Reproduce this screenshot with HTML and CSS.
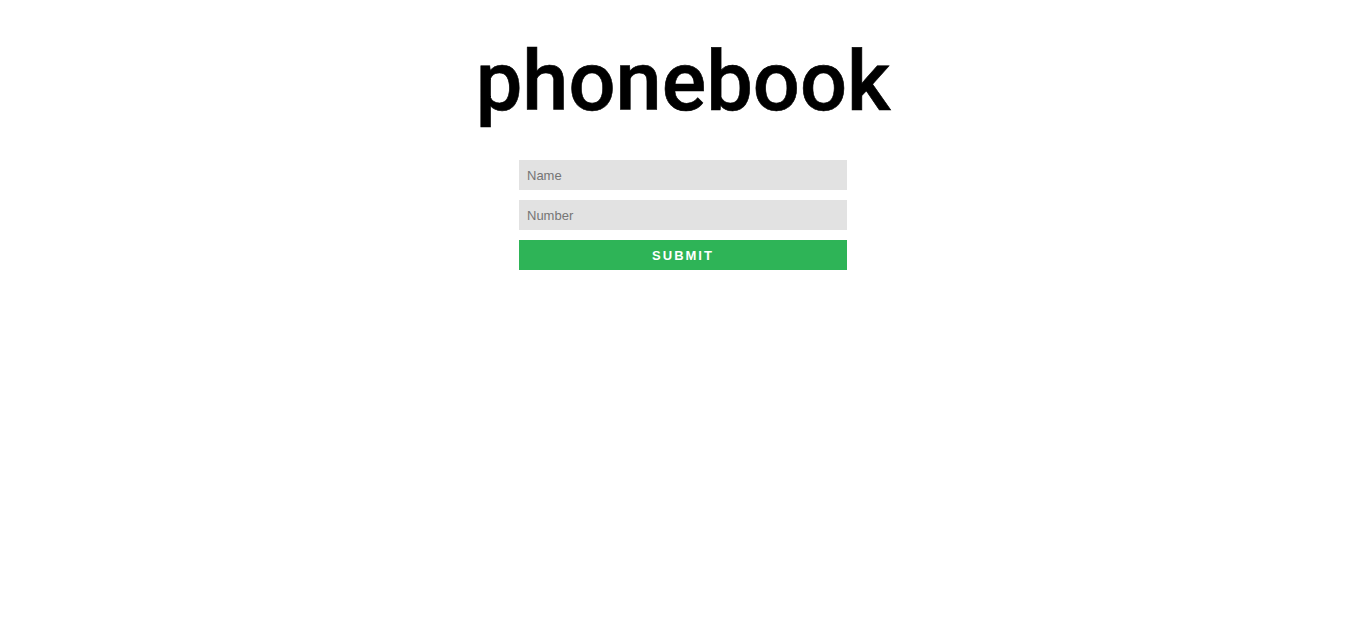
FILE: index.html
```html
<!DOCTYPE html>
<html lang="en">
<head>
<meta charset="utf-8">
<title>phonebook</title>
<link rel="stylesheet" href="styles.css">
</head>
<body>
<main class="app">
  <h1 class="title">phonebook</h1>
  <form class="form">
    <input class="field" type="text" placeholder="Name">
    <input class="field" type="text" placeholder="Number">
    <button class="submit" type="button">SUBMIT</button>
  </form>
</main>
</body>
</html>
```
FILE: styles.css
```css
html, body {
  margin: 0;
  padding: 0;
  background: #fff;
}
.app {
  display: flex;
  flex-direction: column;
  align-items: center;
  font-family: "Liberation Sans", Arial, sans-serif;
}
.title {
  margin: 40px 0 0;
  font-family: Roboto, "Liberation Sans", sans-serif;
  font-weight: 500;
  font-size: 83px;
  line-height: 84px;
  letter-spacing: 0;
  color: #000;
  -webkit-text-stroke: 0.6px #000;
}
.form {
  display: flex;
  flex-direction: column;
  gap: 10px;
  width: 328px;
  margin-top: 36px;
}
.field {
  box-sizing: border-box;
  height: 30px;
  border: none;
  outline: none;
  background: #e2e2e2;
  padding: 0 8px;
  font-family: "Liberation Sans", Arial, sans-serif;
  font-size: 13px;
  color: #333;
}
.field::placeholder {
  color: #757575;
}
.submit {
  height: 30px;
  border: none;
  background: #2eb457;
  color: #fff;
  font-family: "Liberation Sans", Arial, sans-serif;
  font-weight: 700;
  font-size: 13px;
  letter-spacing: 2px;
  padding: 0;
}
```
